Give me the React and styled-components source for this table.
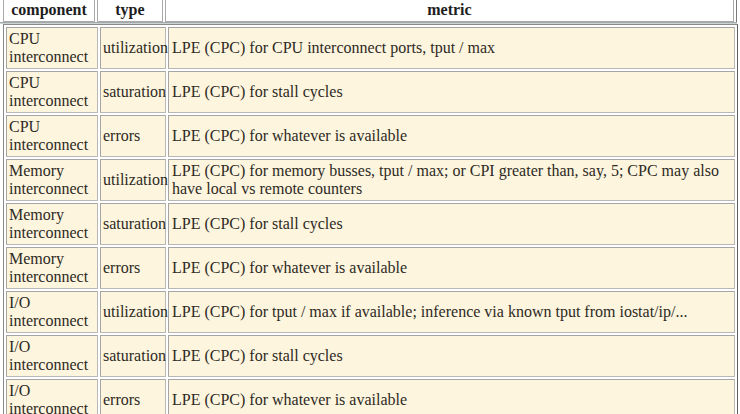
import React from "react";
import styled, { createGlobalStyle } from "styled-components";

const GlobalStyle = createGlobalStyle`
  html, body {
    margin: 0;
    padding: 0;
    background: #ffffff;
    overflow: hidden;
  }
  body {
    font-family: "Liberation Serif", "Times New Roman", serif;
    color: #2b2b2b;
  }
`;

const Page = styled.div`
  width: 740px;
  height: 414px;
  overflow: hidden;
`;

const HeaderWrap = styled.div`
  width: 735px;
  height: 22px;
  border-right: 1px solid #7a7a7a;
  padding-left: 1px;
  overflow: hidden;
`;

const Table = styled.table`
  border-collapse: separate;
  border-spacing: 2px;
  table-layout: fixed;
  font-size: 16px;
  line-height: 18px;
`;

const HeaderTable = styled(Table)`
  background: #ffffff;
  margin-top: -3px;
`;

const Divider = styled.div`
  width: 737px;
  height: 2px;
  box-sizing: border-box;
  border-top: 1px solid #a8a8a8;
  background: #c9d3d6;
`;

const BodyWrap = styled.div`
  padding-left: 3px;
`;

const BodyTable = styled(Table)`
  width: 735px;
  border: 1px solid;
  border-color: #8a8a8a #5e5e5e #5e5e5e #8a8a8a;
  background: #ffffff;
`;

const Th = styled.th`
  font-weight: bold;
  text-align: center;
  padding: 1px 2px 2px;
  border: 1px solid #a9a9a9;
  background: #ffffff;
  color: #1e1e1e;
  height: 22px;
  box-sizing: border-box;
`;

const Td = styled.td`
  background: #fdf5de;
  border: 1px solid;
  border-color: #a5a5a5 #b8b8b8 #b8b8b8 #a5a5a5;
  padding: ${(p) => (p.$wide ? "2px 3px" : "2px 2px")};
  vertical-align: middle;
  text-align: left;
  height: 42px;
  box-sizing: border-box;
  color: #2e2a24;
`;

const columns = [92, 66, 567];

const rows = [
  ["CPU interconnect", "utilization", "LPE (CPC) for CPU interconnect ports, tput / max"],
  ["CPU interconnect", "saturation", "LPE (CPC) for stall cycles"],
  ["CPU interconnect", "errors", "LPE (CPC) for whatever is available"],
  [
    "Memory interconnect",
    "utilization",
    "LPE (CPC) for memory busses, tput / max; or CPI greater than, say, 5; CPC may also have local vs remote counters",
  ],
  ["Memory interconnect", "saturation", "LPE (CPC) for stall cycles"],
  ["Memory interconnect", "errors", "LPE (CPC) for whatever is available"],
  [
    "I/O interconnect",
    "utilization",
    "LPE (CPC) for tput / max if available; inference via known tput from iostat/ip/...",
  ],
  ["I/O interconnect", "saturation", "LPE (CPC) for stall cycles"],
  ["I/O interconnect", "errors", "LPE (CPC) for whatever is available"],
];

function Cols({ widths }) {
  return (
    <colgroup>
      {widths.map((w, i) => (
        <col key={i} style={{ width: w }} />
      ))}
    </colgroup>
  );
}

export default function App() {
  return (
    <>
      <GlobalStyle />
      <Page>
        <HeaderWrap>
          <HeaderTable>
            <Cols widths={[92, 66, 570]} />
            <thead>
              <tr>
                <Th>component</Th>
                <Th>type</Th>
                <Th>metric</Th>
              </tr>
            </thead>
          </HeaderTable>
        </HeaderWrap>
        <Divider />
        <BodyWrap>
          <BodyTable>
            <Cols widths={columns} />
            <tbody>
              {rows.map((r, i) => (
                <tr key={i}>
                  <Td>{r[0]}</Td>
                  <Td>{r[1]}</Td>
                  <Td $wide>{r[2]}</Td>
                </tr>
              ))}
            </tbody>
          </BodyTable>
        </BodyWrap>
      </Page>
    </>
  );
}
